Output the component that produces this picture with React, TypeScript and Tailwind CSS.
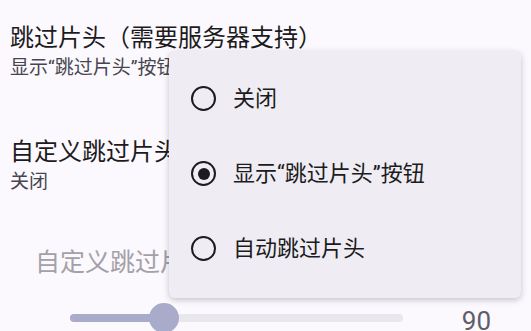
import React, { useState } from "react"

const options = ["关闭", "显示“跳过片头”按钮", "自动跳过片头"]

const Radio = ({ checked }: { checked: boolean }) => (
  <div className="w-[25px] h-[25px] rounded-full border-[2.5px] border-[#1c1b1f] flex items-center justify-center shrink-0">
    {checked && <div className="w-[12px] h-[12px] rounded-full bg-[#1c1b1f]" />}
  </div>
)

const App = () => {
  const [selected, setSelected] = useState(1)
  const value = 90

  return (
    <div
      className="relative w-[531px] h-[331px] overflow-hidden bg-[#fbf8fe]"
      style={{ fontFamily: 'Roboto, "Noto Sans CJK SC", sans-serif' }}
    >
      <div className="flex flex-col px-[10px]">
        <div className="pt-[22px] flex flex-col gap-[2px]">
          <div className="text-[24px] leading-[32px] text-[#1c1b20]">跳过片头（需要服务器支持）</div>
          <div className="text-[19px] leading-[24px] text-[#47464f]">显示“跳过片头”按钮</div>
        </div>
        <div className="pt-[56px] flex flex-col gap-[2px]">
          <div className="text-[24px] leading-[32px] text-[#1c1b20]">自定义跳过片头</div>
          <div className="text-[19px] leading-[24px] text-[#47464f]">关闭</div>
        </div>
        <div className="pt-[53px] pl-[25px] text-[25px] leading-[32px] text-[#a3a1a8]">自定义跳过片头时长</div>
        <div className="flex items-start h-[34px] mt-[22px]">
          <div className="relative self-center ml-[60px] w-[333px] h-[8px] rounded-full bg-[#e9e7ee]">
            <div className="absolute left-0 top-0 h-[8px] w-[94px] rounded-full bg-[#a8abc9]" />
            <div className="absolute left-[79px] top-[-11px] w-[30px] h-[30px] rounded-full bg-[#a8abc9]" />
          </div>
          <div className="ml-auto mr-[30px] mt-[7px] text-[26px] leading-[26px] text-[#5f5e66]">{value}</div>
        </div>
      </div>

      <div className="absolute left-[169px] top-[51px] w-[352px] h-[247px] rounded-[6px] bg-[#efedf3] shadow-[0_2px_6px_rgba(0,0,0,0.22)] pt-[10px]">
        {options.map((opt, i) => (
          <div
            key={i}
            onClick={() => setSelected(i)}
            className="h-[75px] flex items-center pl-[22px] gap-[17px] cursor-pointer"
          >
            <Radio checked={selected === i} />
            <span className="text-[22px] text-[#1c1b20]">{opt}</span>
          </div>
        ))}
      </div>
    </div>
  )
}

export default App
